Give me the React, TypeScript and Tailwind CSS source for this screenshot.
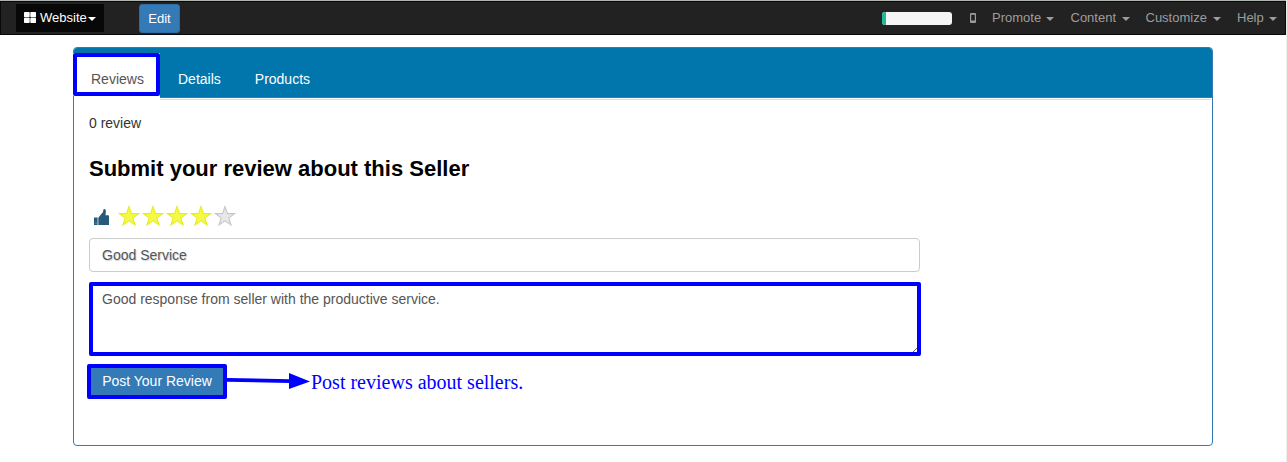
import React from "react";

function Caret({ className = "" }: { className?: string }) {
  return (
    <span
      className={`inline-block h-0 w-0 border-x-4 border-t-4 border-x-transparent ${className}`}
    />
  );
}

function MenuItem({ label, className }: { label: string; className: string }) {
  return (
    <a className={`flex shrink-0 items-center justify-between text-[#9d9d9d] ${className}`}>
      <span>{label}</span>
      <Caret className="mt-px border-t-[#9d9d9d]" />
    </a>
  );
}

function NavBar() {
  return (
    <nav className="flex h-[34px] w-[1286px] items-start border border-[#080808] bg-[#222222] text-[13px] leading-[18px] text-white">
      <a className="ml-[15px] mt-[2px] flex h-7 w-[88px] items-center bg-[#080808] pl-2">
        <svg className="mb-[2px] h-[11px] w-3" viewBox="0 0 12 11" fill="white">
          <rect width="5.7" height="5.2" rx="0.7" />
          <rect x="6.3" width="5.7" height="5.2" rx="0.7" />
          <rect y="5.8" width="5.7" height="5.2" rx="0.7" />
          <rect x="6.3" y="5.8" width="5.7" height="5.2" rx="0.7" />
        </svg>
        <span className="ml-1 pb-px">Website</span>
        <Caret className="ml-px mt-px border-t-white" />
      </a>
      <button className="ml-[35px] mt-[2px] h-[29px] w-[41px] rounded-[3px] border border-[#2e6da4] bg-[#337ab7] pt-px">
        Edit
      </button>
      <div className="ml-auto flex h-8 items-center pr-2">
        <div className="flex h-[13px] w-[70px] overflow-hidden rounded-[3px] bg-[#f5f5f5]">
          <div className="w-1 bg-[#21b799]" />
        </div>
        <svg className="-mt-px ml-[18px] h-[10px] w-[6px]" viewBox="0 0 6 10">
          <path fill="#9d9d9d" fillRule="evenodd" d="M.7 0h4.6l.7.7v8.6l-.7.7H.7L0 9.3V.7zM1.2 1.7v5.8h3.6V1.7z" />
        </svg>
        <MenuItem label="Promote" className="ml-4 w-[62px]" />
        <MenuItem label="Content" className="ml-[16.5px] w-[59.5px]" />
        <MenuItem label="Customize" className="ml-[15.5px] w-[75.5px]" />
        <MenuItem label="Help" className="ml-4 w-10" />
      </div>
    </nav>
  );
}

function Star({ filled }: { filled: boolean }) {
  return (
    <svg className="h-[22px] w-6" viewBox="0 0 24 22">
      <path
        d="M12 1.6l2.5 7h7.1l-5.7 4.3 2.1 7.1-6-4.2L6 20l2.1-7.1L2.4 8.6h7.1z"
        fill={filled ? "#f5fa4a" : "#e8e8e8"}
        stroke={filled ? "#e9ec18" : "#c6c6c6"}
        strokeWidth="1.1"
      />
    </svg>
  );
}

function Rating() {
  return (
    <div className="ml-[5px] mt-[23px] flex h-[22px] items-center">
      <svg className="mt-[2px] h-4 w-[15px]" viewBox="0 0 15 16" fill="#265a7a">
        <path d="M0 8.6h3.6V16H0zM4.3 8.8L7.3 5 9 3.2 9.3 1C9.4.3 9.9 0 10.5.1c.8.2 1.4 1 1.4 2.2L11.5 6.3H14c.7 0 1 .5 1 1.2V16H4.3z" />
        <circle cx="2" cy="14" r="0.6" fill="#b5c9d4" />
      </svg>
      <div className="ml-[8px] flex">
        {[1, 2, 3, 4, 5].map((n) => (
          <Star key={n} filled={n < 5} />
        ))}
      </div>
    </div>
  );
}

export default function App() {
  return (
    <div className="h-[462px] w-[1287px] overflow-hidden border-r border-[#eeeeee] bg-white font-['Liberation_Sans',Arial,sans-serif] text-sm leading-5 text-[#333333]">
      <div className="h-px bg-[#b0b5b2]" />
      <NavBar />
      <section className="ml-[73px] mt-3 h-[399px] w-[1140px] rounded border border-[#337ab7]">
        <header className="flex h-[50px] rounded-t-[3px] border-b border-[#337ab7] bg-[#0076ad] text-white">
          <div className="-ml-px mt-[5px] h-[46px] w-[87px] bg-white">
            <div className="flex h-[43px] items-center rounded-[2px] border-4 border-[#0000ff] pl-[14px] pt-[9px] text-[#555555]">
              Reviews
            </div>
            <div className="h-[3px] w-px bg-[#337ab7]" />
          </div>
          <a className="ml-[18px] mt-[21px]">Details</a>
          <a className="ml-[34px] mt-[21px]">Products</a>
        </header>
        <div className="ml-[86px] mr-px mt-px h-px bg-[#dddddd]" />
        <div className="pl-[15px]">
          <p className="mt-[13px]">0 review</p>
          <h2 className="mt-[23px] text-[22px] font-bold leading-[26px] text-black">
            Submit your review about this Seller
          </h2>
          <Rating />
          <input
            className="mt-[11px] block h-[34px] w-[831px] rounded border border-[#cccccc] px-3 text-[#555555] outline-none text-shadow-[1px_1px_1px_#ccd5dd]"
            defaultValue="Good Service"
          />
          <div className="relative mt-[10px] h-[74px] w-[832px]">
            <textarea
              className="block h-full w-full resize-none rounded-[2px] border-4 border-[#0000ff] px-[9px] py-[3px] text-[#555555] outline-none"
              defaultValue="Good response from seller with the productive service."
            />
            <svg className="absolute bottom-1 right-1 h-1 w-1" viewBox="0 0 4 4">
              <path d="M0 4L4 0" stroke="#555555" strokeWidth="0.9" />
            </svg>
          </div>
          <div className="-ml-[2px] mt-2 flex h-[35px] items-center">
            <button className="h-[35px] w-[140px] shrink-0 rounded-[2px] border-4 border-[#0000ff] bg-[#337ab7] pb-px text-white">
              Post Your Review
            </button>
            <svg className="mb-[2px] h-[18px] w-[83px] shrink-0" viewBox="0 0 83 18">
              <path d="M0 6l63 1.2V11L0 9.8z" fill="#0000ff" />
              <path d="M62 1l21 8.5L62 17z" fill="#0000ff" />
            </svg>
            <span className="ml-px whitespace-nowrap font-['Liberation_Serif',serif] text-xl leading-6 text-[#0000ff]">
              Post reviews about sellers.
            </span>
          </div>
        </div>
      </section>
    </div>
  );
}
